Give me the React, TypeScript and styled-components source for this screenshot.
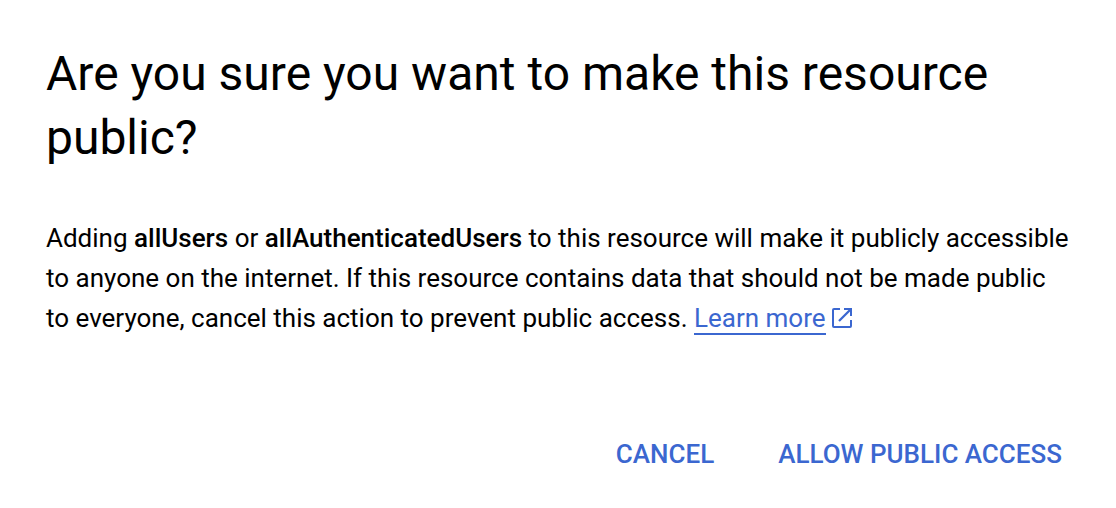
import React from "react";
import styled, { createGlobalStyle } from "styled-components";

const GlobalStyle = createGlobalStyle`
  body {
    margin: 0;
    background: #fff;
    color: #000;
    font-family: Roboto, "Liberation Sans", sans-serif;
  }
`;

const Dialog = styled.main`
  padding: 42px 46px 32px;
`;

const Title = styled.h1`
  margin: 0 0 48px;
  font-size: 48px;
  line-height: 64px;
  font-weight: 400;
`;

const Message = styled.p`
  margin: 0;
  font-size: 26px;
  line-height: 40px;
`;

const Strong = styled.strong`
  font-weight: 500;
`;

const Link = styled.a`
  color: #3b67d0;
  text-decoration: none;
`;

const LinkText = styled.span`
  border-bottom: 2px solid currentColor;
`;

const LinkIcon = styled.svg`
  width: 20px;
  height: 20px;
  margin-left: 6px;
  vertical-align: -1px;
`;

const Actions = styled.div`
  display: flex;
  justify-content: flex-end;
  gap: 48px;
  margin-top: 80px;
`;

const TextButton = styled.button`
  padding: 0 8px;
  border: 0;
  background: none;
  color: #3b67d0;
  font: inherit;
  font-size: 26px;
  line-height: 72px;
  font-weight: 500;
  text-transform: uppercase;
  cursor: pointer;
`;

export default function App() {
  return (
    <>
      <GlobalStyle />
      <Dialog role="dialog" aria-labelledby="title" aria-describedby="message">
        <Title id="title">Are you sure you want to make this resource public?</Title>
        <Message id="message">
          Adding <Strong>allUsers</Strong> or <Strong>allAuthenticatedUsers</Strong> to this
          resource will make it publicly accessible to anyone on the internet. If this resource
          contains data that should not be made public to everyone, cancel this action to prevent
          public access.{" "}
          <Link href="#learn-more">
            <LinkText>Learn more</LinkText>
            <LinkIcon viewBox="0 0 20 20" fill="none" stroke="currentColor" strokeWidth="2" aria-hidden="true">
              <path d="M8 1H2Q1 1 1 2V18Q1 19 2 19H18Q19 19 19 18V12M12 1H19V8" />
              <path d="M19 1L7 13" strokeWidth="2.3" />
            </LinkIcon>
          </Link>
        </Message>
        <Actions>
          <TextButton type="button">Cancel</TextButton>
          <TextButton type="button">Allow public access</TextButton>
        </Actions>
      </Dialog>
    </>
  );
}
